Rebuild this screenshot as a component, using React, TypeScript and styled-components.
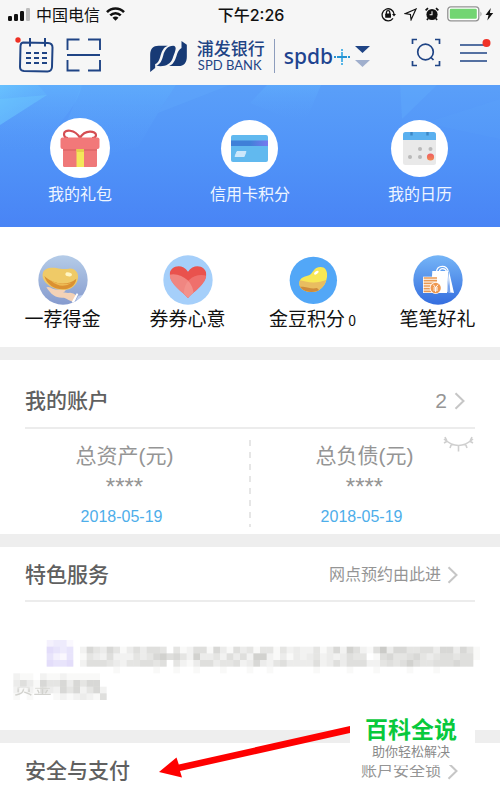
import React from "react";
import styled, { createGlobalStyle } from "styled-components";

const navy = "#1f4485";

const GlobalStyle = createGlobalStyle`
  * { box-sizing: border-box; }
  body {
    margin: 0;
    background: #fff;
    font-family: "Liberation Sans", "Noto Sans CJK SC", sans-serif;
  }
  button { border: 0; padding: 0; margin: 0; background: none; font: inherit; color: inherit; cursor: pointer; }
  a { color: inherit; text-decoration: none; }
  svg { display: block; flex: none; }
  h2, p, dl, dt, dd { margin: 0; }
`;

const Screen = styled.main`
  overflow: hidden;
`;

const StatusBar = styled.div`
  display: grid;
  grid-template-columns: 1fr auto 1fr;
  align-items: center;
  height: 28px;
  padding: 0 6px 0 8px;
  background: #f6f6f6;
  color: #111;
  font-size: 16px;
`;

const StatusGroup = styled.div<{ $end?: boolean }>`
  display: flex;
  align-items: center;
  gap: ${(p) => (p.$end ? 8 : 6)}px;
  justify-content: ${(p) => (p.$end ? "flex-end" : "flex-start")};
`;

const Clock = styled.time`
  font-family: Inter, "Noto Sans CJK SC", sans-serif;
  font-weight: 500;
  font-size: 16px;
`;

const Header = styled.header`
  display: flex;
  justify-content: space-between;
  align-items: center;
  height: 57px;
  padding: 0 9px 4px 14px;
  background: #f6f6f6;
`;

const HeaderGroup = styled.div<{ $gap: number }>`
  display: flex;
  align-items: center;
  gap: ${(p) => p.$gap}px;
`;

const Brand = styled.div`
  display: flex;
  align-items: center;
  gap: 9px;
  padding: 2px 0 0 8px;
  color: ${navy};
`;

const BrandName = styled.div`
  display: flex;
  flex-direction: column;
  padding-right: 9px;
  border-right: 1px solid #8d9dbd;
  font-size: 17px;
  line-height: 18px;
  font-weight: 500;
  font-family: "Noto Sans CJK SC", sans-serif;
  white-space: nowrap;
`;

const BrandLatin = styled.span`
  padding-left: 1px;
  font-family: Lato, sans-serif;
  font-size: 13px;
  line-height: 16px;
  font-weight: 400;
`;

const Switcher = styled.button`
  display: flex;
  align-items: center;
  color: #1f4490;
  font-family: "Noto Sans", sans-serif;
  font-size: 21px;
  line-height: 26px;
  font-weight: 500;
`;

const Banner = styled.nav`
  position: relative;
  display: flex;
  justify-content: space-between;
  height: 142px;
  padding: 33px 48px 0;
  background: linear-gradient(#5a9ff9, #5093f8 50%, #4984f5);
`;

const Facets = styled.svg`
  position: absolute;
  inset: 0;
  width: 100%;
  height: 100%;
`;

const BannerItem = styled.button`
  position: relative;
  display: flex;
  flex-direction: column;
  align-items: center;
  gap: 5px;
  height: 89px;
  color: #eef5ff;
  font-size: 16px;
  line-height: 24px;
  white-space: nowrap;
`;

const Disc = styled.span<{ $size: number }>`
  display: flex;
  align-items: center;
  justify-content: center;
  width: ${(p) => p.$size}px;
  height: ${(p) => p.$size}px;
  margin: ${(p) => (p.$size < 60 ? "2px 0 1px" : "0")};
  border-radius: 50%;
  background: #fff;
`;

const Shortcuts = styled.nav`
  display: grid;
  grid-template-columns: repeat(4, 1fr);
  height: 120px;
  padding-top: 28px;
`;

const Shortcut = styled.button`
  display: flex;
  flex-direction: column;
  align-items: center;
  gap: 2px;
  height: 78px;
  color: #111;
  font-size: 19px;
  line-height: 26px;
  white-space: nowrap;

  small { font-size: 14px; font-family: "Noto Sans CJK SC", sans-serif; }
`;

const Section = styled.section`
  position: relative;
  border-top: 13px solid #eee;
`;

const SectionHead = styled.div<{ $tall?: boolean; $last?: boolean }>`
  display: flex;
  align-items: center;
  justify-content: space-between;
  margin: 0 25px;
  padding: ${(p) => (p.$tall ? "25px 0 10px" : p.$last ? "12px 0 3px" : "12px 0 9px")};
  border-bottom: ${(p) => (p.$last ? "0" : "2px solid #ececec")};
`;

const Title = styled.h2`
  color: #606060;
  font-size: 21px;
  line-height: 32px;
  font-weight: 500;
`;

const More = styled.a<{ $large?: boolean }>`
  display: flex;
  align-items: center;
  gap: ${(p) => (p.$large ? 7 : 6)}px;
  padding-right: ${(p) => (p.$large ? 9 : 16)}px;
  color: #959595;
  font-size: ${(p) => (p.$large ? 21 : 16)}px;
  line-height: 32px;
`;

const Totals = styled.div`
  display: grid;
  grid-template-columns: 1fr 2px 1fr;
  height: 105px;
`;

const Dashes = styled.span`
  margin: 11px 0 7px;
  background: repeating-linear-gradient(#e6e6e6 0 6px, transparent 6px 12px);
`;

const Total = styled.dl<{ $inset?: boolean }>`
  padding: 12px ${(p) => (p.$inset ? 22 : 0)}px 0 0;
  text-align: center;
  color: #959595;
  font-size: 21px;
  line-height: 30px;
`;

const Masked = styled.dd`
  font-size: 24px;
  line-height: 32px;
`;

const DateText = styled.dd`
  padding-right: 6px;
  color: #4eaeea;
  font-size: 16px;
  line-height: 28px;
`;

const EyeButton = styled.button`
  position: absolute;
  right: 26px;
  top: 76px;
`;

const Notice = styled.div`
  display: grid;
  padding: 38px 0 30px;

  > * { grid-area: 1 / 1; }
`;

const NoticeText = styled.p`
  align-self: end;
  padding-left: 14px;
  color: #d2d2ce;
  font-size: 19px;
  line-height: 24px;
  mask-image: linear-gradient(transparent 40%, #000 60%);
`;

const Mosaic = styled.svg`
  width: 100%;
  height: auto;
`;

const Arrow = styled.svg`
  position: absolute;
  right: 150px;
  top: -18px;
`;

const Watermark = styled.aside`
  position: absolute;
  right: 25px;
  top: -38px;
  width: 125px;
  height: 60px;
  padding: 10px 3px 0 0;
  background: #fff;
  text-align: center;
`;

const WatermarkName = styled.p`
  color: #08c93c;
  font-size: 23px;
  line-height: 30px;
  font-weight: 700;
`;

const WatermarkNote = styled.p`
  color: #8a8a8a;
  font-size: 13px;
  line-height: 14px;
`;

const Chevron = () => (
  <svg width="12" height="18" viewBox="0 0 12 18" fill="none" stroke="#c6c6c6" strokeWidth="2">
    <path d="M1.500 1.200 9.500 9l-8 7.800" />
  </svg>
);

const SignalIcon = () => (
  <svg width="22" height="14" viewBox="0 0 22 14" fill="#111">
    <rect x="0" y="9" width="4" height="5" rx="1.2" />
    <rect x="6" y="7" width="4" height="7" rx="1.2" />
    <rect x="12" y="4" width="4" height="10" rx="1.2" />
    <rect x="18" y="1" width="4" height="13" rx="1.2" fill="#bdbdbd" />
  </svg>
);

const WifiIcon = () => (
  <svg width="19" height="14" viewBox="0 0 19 14" fill="none" stroke="#111" strokeWidth="2.6">
    <path d="M1 5.200C5.800 .3 13.200 .3 18 5.200" />
    <path d="M4.300 8.400c2.900-2.900 7.500-2.900 10.400 0" />
    <path d="M6.500 10.700c1.700-1.700 4.300-1.700 6 0l-3 3z" fill="#111" stroke="none" />
  </svg>
);

const StatusIcons = () => (
  <>
    <svg width="15" height="15" viewBox="0 0 15 15" fill="none" stroke="#111" strokeWidth="1.300">
      <path d="M12 11.300A6 6 0 1 1 13.100 7.200" />
      <path d="M11 7h4l-2 2.500z" fill="#111" stroke="none" />
      <rect x="4.200" y="6.600" width="5.800" height="4.200" rx=".6" fill="#111" stroke="none" />
      <path d="M5.400 7V5.400a1.700 1.700 0 0 1 3.400 0V7" />
    </svg>
    <svg width="13" height="13" viewBox="0 0 13 13" fill="none" stroke="#111" strokeWidth="1.200">
      <path d="M12 1 1.200 5.600l5.200.9.700 5.200z" />
    </svg>
    <svg width="14" height="14" viewBox="0 0 14 14" fill="#111">
      <circle cx="7" cy="7.500" r="5.600" />
      <path d="M.6 3.400 3 1.200M13.400 3.400 11 1.200M3 11.500l-1 1.500M11 11.500l1 1.500" stroke="#111" strokeWidth="1.700" />
      <path d="M7 4.200v3.600H4.600" stroke="#f6f6f6" fill="none" strokeWidth="1.100" />
    </svg>
    <svg width="47" height="16" viewBox="0 0 47 16">
      <rect x=".8" y=".8" width="31" height="14" rx="3" fill="#fff" stroke="#929292" strokeWidth="1.300" />
      <rect x="2.800" y="2.800" width="27" height="10" rx="1.200" fill="#72d572" />
      <path d="M33.500 5.500q2 2.500 0 5z" fill="#929292" />
      <path d="M43.800 2 38.500 9h3l-1.200 5.500L46.200 7h-3.300z" fill="#111" />
    </svg>
  </>
);

const CalendarIcon = () => (
  <svg width="40" height="38" viewBox="0 0 40 38" fill="none" stroke={navy} strokeWidth="2">
    <path d="M9 6.500 34 7q4.500.3 4.500 4.500L38 31q-.4 4.500-4.500 4.500L10 35q-4-.3-4-4L6.500 10q.3-3.300 2.500-3.500z" />
    <path d="M16 2v8.500M31 2v8.500" />
    <path d="M12 17h5M20 17h5M28 17h5M12 22h5M20 22h5M28 22h5M12 27h5M20 27h5M28 27h5" />
    <circle cx="4" cy="4" r="2.700" fill="#ee3024" stroke="none" />
  </svg>
);

const ScanIcon = () => (
  <svg width="35" height="34" viewBox="0 0 35 34" fill="none" stroke={navy} strokeWidth="1.900">
    <path d="M1.500 12V1.500h12M22 1.500h12V12M1.500 22v10.500h12M22 32.500h12V22M1 17h33" />
  </svg>
);

const LogoIcon = () => (
  <svg width="39" height="32" viewBox="0 0 116 96" fill="#173a75">
    <path d="M3 96V45C3 26 12 17 28 17H56C43 21 38 34 34 47 31 60 26 70 18 72V84Z" />
    <path d="M21 77C33 73 38 62 42 47 46 29 56 17 72 17c6 0 9 5 7 12-3 12-6 17-9 27C63 74 44 82 21 77Z" />
    <path d="M113 14V50c0 18-9 28-25 28H60C72 74 78 61 82 48c3-12 8-20 15-24V3Z" />
  </svg>
);

const SwitcherMarks = () => (
  <svg width="38" height="26" viewBox="0 0 38 26">
    <path d="M9 6v16" stroke="#55b4e6" strokeWidth="2" strokeDasharray="2 1 10 1 2" />
    <path d="M1 14h16" stroke="#2794d2" strokeWidth="2" strokeDasharray="2 1 10 1 2" />
    <path d="M22 3h15l-7.500 7z" fill={navy} />
    <path d="M22 17h15l-7.500 7z" fill="#a0afcd" />
  </svg>
);

const SearchIcon = () => (
  <svg width="30" height="34" viewBox="0 0 30 34" fill="none" stroke={navy} strokeWidth="1.700">
    <path d="M1.500 6V1.500H6M24 1.500h4.500V6M1.500 23v4.500H6M24 27.500h4.500V23" />
    <circle cx="14.500" cy="14" r="7.800" />
    <path d="m19.500 19 3 3" />
  </svg>
);

const MenuIcon = () => (
  <svg width="32" height="34" viewBox="0 0 32 34">
    <path d="M1 7h27M1 15h27M1 23h27" stroke={navy} strokeWidth="1.600" />
    <circle cx="27.500" cy="5" r="4" fill="#f03228" />
  </svg>
);

const GiftIcon = () => (
  <svg width="40" height="40" viewBox="0 0 40 40">
    <path d="M20 10C15 1 4 1 4 6q0 4 4 4M20 10c5-9 16-7 16-3q0 3-4 3" fill="none" stroke="#d44d52" strokeWidth="2.200" />
    <rect x="3" y="15" width="34" height="24" rx="1.500" fill="#ef7878" />
    <path d="M3 20h34v3H3z" fill="#e26a6b" />
    <rect x=".5" y="9.500" width="39" height="11.500" rx="2" fill="#f27879" />
    <path d="M16.500 21h7.500v18h-7.500z" fill="#f4e75a" />
    <path d="M16.500 21h7.500v3h-7.500z" fill="#e5cf4a" />
  </svg>
);

const CardIcon = () => (
  <svg width="37" height="27" viewBox="0 0 37 27">
    <defs>
      <linearGradient id="stripe"><stop offset=".5" stopColor="#3f80d8" /><stop offset="1" stopColor="#7879ef" /></linearGradient>
    </defs>
    <rect width="37" height="27" rx="2" fill="#61b9ef" />
    <path d="M0 5.500h37V11H0z" fill="url(#stripe)" />
    <path d="M6 16.500h9l-1.800 5H4z" fill="#cce8fb" stroke="#cce8fb" strokeLinejoin="round" />
  </svg>
);

const DateIcon = () => (
  <svg width="33" height="33" viewBox="0 0 33 33">
    <defs>
      <linearGradient id="today" x2="0" y2="1"><stop stopColor="#ef5c63" /><stop offset="1" stopColor="#f18a50" /></linearGradient>
    </defs>
    <rect width="33" height="33" rx="2.500" fill="#e9e9e9" />
    <path d="M0 8V2.500Q0 0 2.500 0h28Q33 0 33 2.500V8z" fill="#5ab0ef" />
    <path d="M8.500 0v3.500M24.500 0v3.500" stroke="#3c87c6" strokeWidth="2.400" />
    <g fill="#b9b9b9">
      <circle cx="17" cy="17" r="2" /><circle cx="27.500" cy="17" r="2" />
      <circle cx="7" cy="25" r="2" /><circle cx="17" cy="25" r="2" />
    </g>
    <circle cx="27.500" cy="25" r="3.600" fill="url(#today)" />
  </svg>
);

const GoldHandIcon = () => (
  <svg width="50" height="50" viewBox="0 0 150 150">
    <defs>
      <linearGradient id="haze" x2="0" y2="1"><stop stopColor="#b5cce8" /><stop offset="1" stopColor="#869bce" /></linearGradient>
      <clipPath id="round"><circle cx="75" cy="75" r="74" /></clipPath>
    </defs>
    <circle cx="75" cy="75" r="74" fill="url(#haze)" />
    <g clipPath="url(#round)">
      <path d="M25 97q9-3 19 4 15 5 32 1c9-2 9 7-1 10l15 2q15-3 24 7l-8 19c-11-3-18-8-28-12-26 2-37-8-53-31z" fill="#f3d2b7" />
      <path d="M14 57c2-18 23-21 41-18 14 3 24 4 38 2 16-3 30 12 27 28-3 24-24 38-47 36C44 104 10 82 14 57z" fill="#efca67" />
      <path d="M19 63c27 25 68 31 96 8-4 44-83 43-96-8z" fill="#db9132" />
      <path d="M36 75q35 18 65 8-31 22-65-8z" fill="#edba55" />
      <ellipse cx="92" cy="58" rx="10" ry="6" fill="#fff6c4" transform="rotate(12 92 58)" />
      <path d="m101 141 15-26 5 2-14 29z" fill="#fff" />
      <path d="m109 146 12-24 24-4v32z" fill="#bdcff1" />
    </g>
  </svg>
);

const HeartIcon = () => (
  <svg width="50" height="50" viewBox="0 0 150 150">
    <defs>
      <clipPath id="heart"><path d="M75 129C61 113 20 88 20 58c0-25 37-36 55-8 18-28 55-17 55 8 0 30-41 55-55 71z" /></clipPath>
    </defs>
    <circle cx="75" cy="75" r="74" fill="#a5cffa" />
    <g clipPath="url(#heart)">
      <path d="M0 0h150v150H0z" fill="#e9524d" />
      <circle cx="115" cy="112" r="52" fill="#f07b77" fillOpacity=".75" />
      <circle cx="31" cy="119" r="61" fill="#f5a39c" fillOpacity=".65" />
    </g>
  </svg>
);

const BeanIcon = () => (
  <svg width="50" height="50" viewBox="0 0 150 150">
    <defs>
      <clipPath id="bean"><path d="M34 84c1-18 17-18 29-23 13-6 13-25 35-25 18 0 23 19 17 39-6 23-25 37-46 36-21-1-36-11-35-27z" /></clipPath>
    </defs>
    <circle cx="76" cy="76" r="71" fill="#52a7f7" />
    <g clipPath="url(#bean)">
      <path d="M20 20h110v110H20z" fill="#f7e855" />
      <path d="M20 75c24-3 48 19 100-2v57H20z" fill="#e9bd60" />
      <path d="M20 95h25c17 1 24 8 42 4l30 30H20z" fill="#ce8b3c" />
    </g>
    <ellipse cx="85" cy="53" rx="8" ry="4" fill="#fff" transform="rotate(-36 85 53)" />
  </svg>
);

const BagIcon = () => (
  <svg width="50" height="50" viewBox="0 0 150 150">
    <defs>
      <linearGradient id="sky" x2="0" y2="1"><stop stopColor="#75b5f7" /><stop offset="1" stopColor="#356edf" /></linearGradient>
    </defs>
    <circle cx="75" cy="75" r="74" fill="url(#sky)" />
    <path d="M70 51q2-17 18-17 15 0 18 16M79 50q1-9 10-9t12 9" fill="none" stroke="#fff" strokeWidth="3.500" />
    <path d="M58 48h48l-4 66H54z" fill="#fff" />
    <path d="m108 48 15 66-21-3z" fill="#fff" />
    <path d="m108 67 4 44h-9z" fill="#79a5ef" />
    <path d="M30 65h44v49H30z" fill="#fff" />
    <path d="M32 69h40M32 77h40M32 85h40M32 93h40M32 101h40M32 109h40" stroke="#ea9952" strokeWidth="5" />
    <circle cx="68" cy="99" r="18" fill="#fff" />
    <circle cx="68" cy="99" r="15.500" fill="#ef9850" />
    <path d="m61 89 7 9 7-9M68 98v13M61 99h14M61 105h14" fill="none" stroke="#fff" strokeWidth="3" />
  </svg>
);

const EyeClosedIcon = () => (
  <svg width="31" height="17" viewBox="0 0 31 17" fill="none" stroke="#cfcfcf" strokeWidth="1.600">
    <path d="M1 3q14.500 13 29 0M2 1l2 4M29 1l-2 4M1 7l3.500-2M30 7l-3.500-2M8.500 8 7 12M15.500 9.500v6M22.500 8l1.500 4" />
  </svg>
);

type Strip = { x: number; y: number; color: string; levels: string };

const strips: Strip[] = [
  { x: 7, y: 0, color: "#8068e8", levels: "2331" },
  { x: 7, y: 1, color: "#8068e8", levels: "5434" },
  { x: 7, y: 2, color: "#8068e8", levels: "4214" },
  { x: 7, y: 3, color: "#8068e8", levels: "5445" },
  { x: 12, y: 1, color: "#6f6f66", levels: "264364135355404125516315341441423224136275215836644553663641" },
  { x: 12, y: 2, color: "#6f6f66", levels: "143252224346756427334253527721313234232354401564456434554551" },
  { x: 12, y: 3, color: "#6f6f66", levels: "255543244554504213553445236324533335235355522454575445556550" },
  { x: 12, y: 4, color: "#6f6f66", levels: "000001000001001001000100010010000001000010001000010001000000" },
  { x: 2, y: 5, color: "#6f6f66", levels: "21102112111110" },
  { x: 2, y: 6, color: "#6f6f66", levels: "35316446364660" },
  { x: 2, y: 7, color: "#6f6f66", levels: "21214326462462" },
  { x: 2, y: 8, color: "#6f6f66", levels: "10100012123215" },
];

const Obscured = () => (
  <Mosaic viewBox="0 0 75 9" aria-hidden="true">
    {strips.map((s) =>
      [...s.levels].map((level, i) =>
        level === "0" ? null : (
          <rect key={`${s.x}-${s.y}-${i}`} x={s.x + i} y={s.y} width="1" height="1" fill={s.color} opacity={Number(level) * 0.045} />
        )
      )
    )}
  </Mosaic>
);

const bannerItems = [
  { label: "我的礼包", size: 60, icon: <GiftIcon /> },
  { label: "信用卡积分", size: 57, icon: <CardIcon /> },
  { label: "我的日历", size: 57, icon: <DateIcon /> },
];

const shortcuts = [
  { label: "一荐得金", icon: <GoldHandIcon /> },
  { label: "券券心意", icon: <HeartIcon /> },
  { label: "金豆积分", count: "0", icon: <BeanIcon /> },
  { label: "笔笔好礼", icon: <BagIcon /> },
];

export default function App() {
  return (
    <Screen>
      <GlobalStyle />
      <StatusBar>
        <StatusGroup>
          <SignalIcon />
          <span>中国电信</span>
          <WifiIcon />
        </StatusGroup>
        <Clock>下午2:26</Clock>
        <StatusGroup $end>
          <StatusIcons />
        </StatusGroup>
      </StatusBar>

      <Header>
        <HeaderGroup $gap={12}>
          <button aria-label="日历"><CalendarIcon /></button>
          <button aria-label="扫一扫"><ScanIcon /></button>
        </HeaderGroup>
        <Brand>
          <LogoIcon />
          <BrandName>
            浦发银行
            <BrandLatin>SPD BANK</BrandLatin>
          </BrandName>
          <Switcher>
            spdb
            <SwitcherMarks />
          </Switcher>
        </Brand>
        <HeaderGroup $gap={18}>
          <button aria-label="搜索"><SearchIcon /></button>
          <button aria-label="菜单"><MenuIcon /></button>
        </HeaderGroup>
      </Header>

      <Banner>
        <Facets viewBox="0 0 500 142" preserveAspectRatio="none" aria-hidden="true">
          <defs>
            <linearGradient id="glow" gradientUnits="userSpaceOnUse" x1="0" y1="0" x2="50" y2="55"><stop stopColor="#6bc8ff" stopOpacity=".75" /><stop offset="1" stopColor="#5aa5fa" stopOpacity="0" /></linearGradient>
            <linearGradient id="fade" x2="0" y2="1"><stop stopColor="#64b8ff" stopOpacity=".6" /><stop offset="1" stopColor="#5597f9" stopOpacity="0" /></linearGradient>
          </defs>
          <path d="M0 0h82C78 16 70 26 60 38L42 68H0z" fill="url(#fade)" />
          <path d="M0 0h38l9 10L0 40z" fill="url(#glow)" />
          <path d="M0 14 47 10 0 40z" fill="#6fcfff" fillOpacity=".3" />
          <path d="M82 0h94l-18 28-20 34-90 20z" fill="url(#fade)" fillOpacity=".7" />
          <path d="M176 0h54l-72 28z" fill="#62acfc" fillOpacity=".3" />
          <path d="M267 0h54l-17 40-54-22z" fill="url(#fade)" fillOpacity=".6" />
          <path d="M400 0h37l-35 34z" fill="#62acfc" fillOpacity=".4" />
          <path d="M500 14v40l-75-16z" fill="#62acfc" fillOpacity=".12" />
        </Facets>
        {bannerItems.map((item) => (
          <BannerItem key={item.label}>
            <Disc $size={item.size}>{item.icon}</Disc>
            {item.label}
          </BannerItem>
        ))}
      </Banner>

      <Shortcuts>
        {shortcuts.map((item) => (
          <Shortcut key={item.label}>
            {item.icon}
            <span>
              {item.label}
              {item.count && <small> {item.count}</small>}
            </span>
          </Shortcut>
        ))}
      </Shortcuts>

      <Section>
        <SectionHead $tall>
          <Title>我的账户</Title>
          <More href="#accounts" $large>2 <Chevron /></More>
        </SectionHead>
        <EyeButton aria-label="显示金额"><EyeClosedIcon /></EyeButton>
        <Totals>
          <Total>
            <dt>总资产(元)</dt>
            <Masked>****</Masked>
            <DateText>2018-05-19</DateText>
          </Total>
          <Dashes />
          <Total $inset>
            <dt>总负债(元)</dt>
            <Masked>****</Masked>
            <DateText>2018-05-19</DateText>
          </Total>
        </Totals>
      </Section>

      <Section>
        <SectionHead>
          <Title>特色服务</Title>
          <More href="#branches">网点预约由此进 <Chevron /></More>
        </SectionHead>
        <Notice>
          <NoticeText>资金</NoticeText>
          <Obscured />
        </Notice>
      </Section>

      <Section>
        <SectionHead $last>
          <Title>安全与支付</Title>
          <More href="#security">账户安全锁 <Chevron /></More>
        </SectionHead>
        <Arrow width="192" height="54" viewBox="0 0 192 54" fill="#fe0000" aria-hidden="true">
          <path d="M1 47 18.500 32.500l2.300 7L192 1v7L22 46l2 6.500z" />
        </Arrow>
        <Watermark>
          <WatermarkName>百科全说</WatermarkName>
          <WatermarkNote>助你轻松解决</WatermarkNote>
        </Watermark>
      </Section>
    </Screen>
  );
}
